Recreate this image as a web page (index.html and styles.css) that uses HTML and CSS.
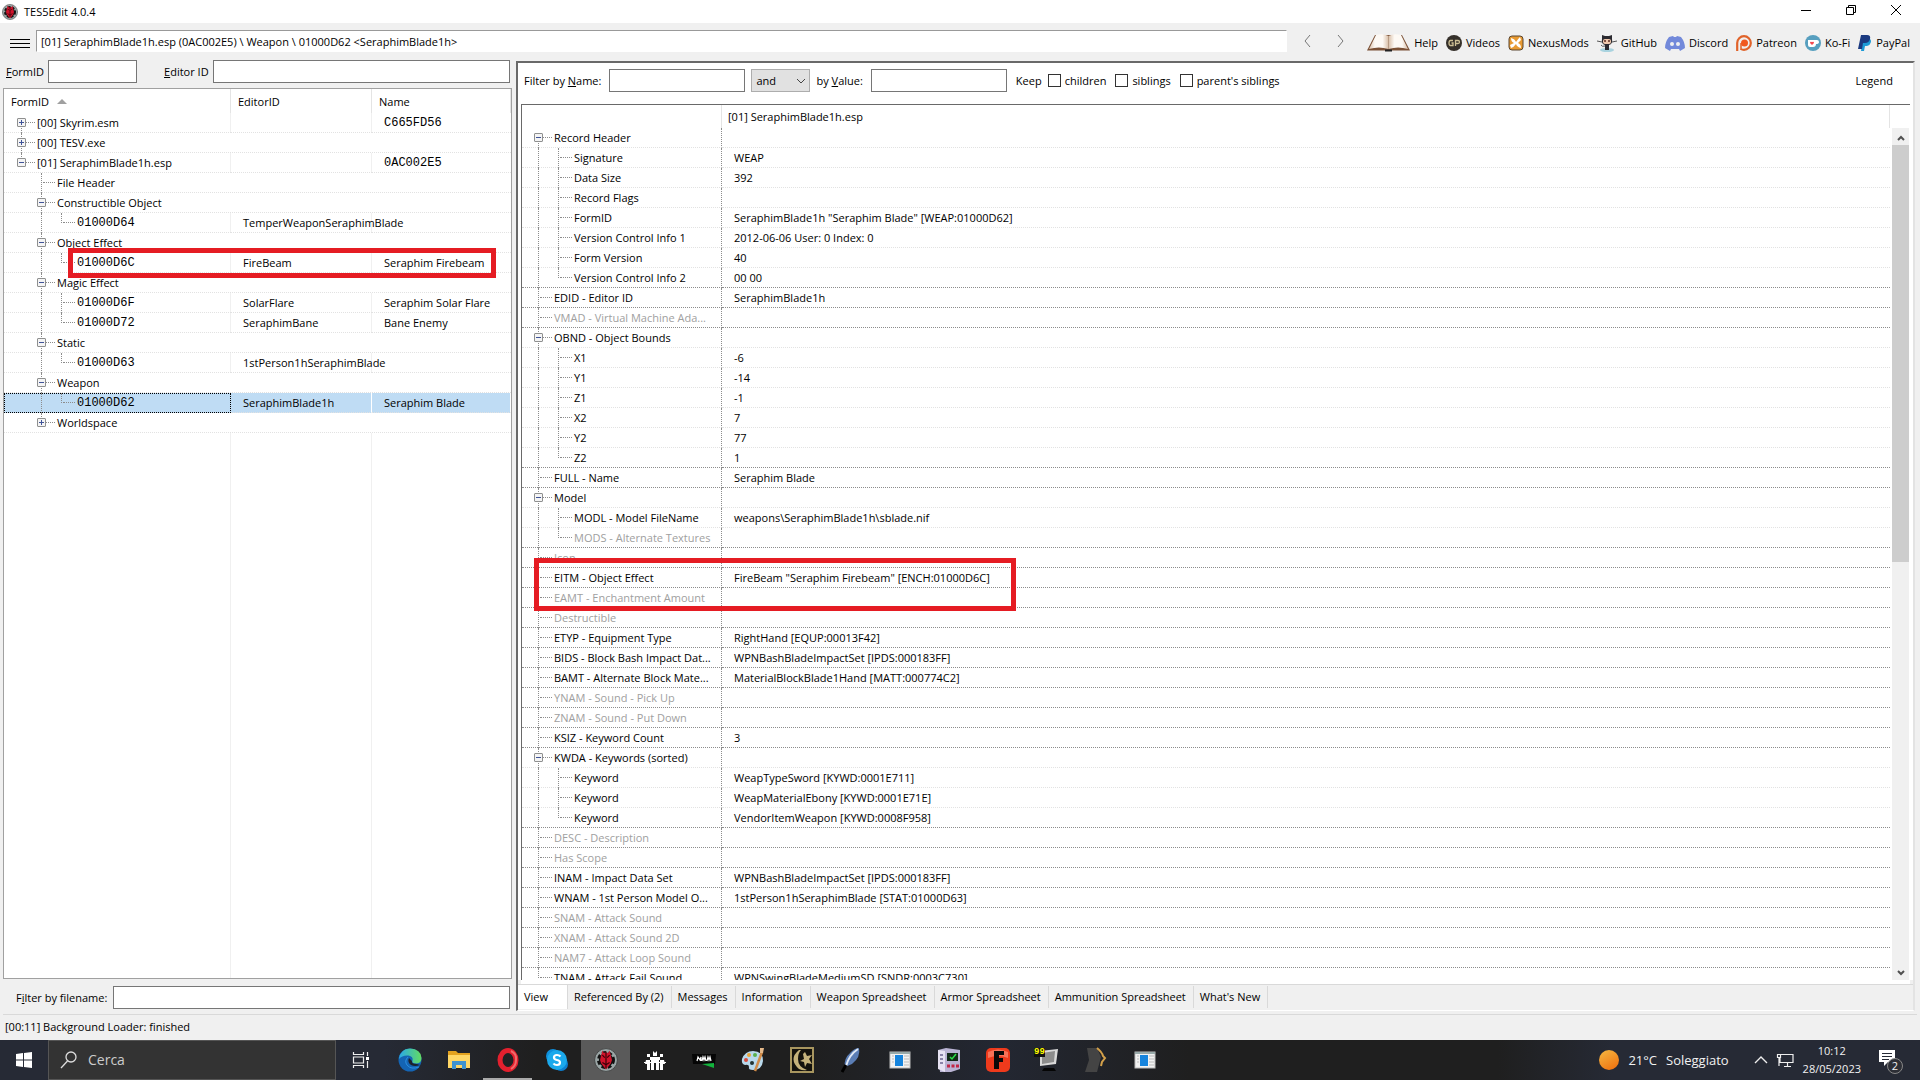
FILE: index.html
```html
<!DOCTYPE html>
<html lang="en">
<head>
  <meta charset="UTF-8">
  <title>TES5Edit 4.0.4</title>
  <meta name="viewport" content="width=device-width, initial-scale=1.0">
  <link rel="stylesheet" href="styles.css">
</head>
<body>
  <svg width="0" height="0" class="defs">
    <symbol id="logo" viewBox="0 0 20 20">
      <circle cx="10" cy="10" r="9.5" fill="#9aa5a5" stroke="#333" stroke-width=".6"/>
      <circle cx="10" cy="10" r="6" fill="#111" stroke="#111" stroke-width="3" stroke-dasharray="3 2"/>
      <path d="M7 2l1 2h4l1-2 1 4 1 4-1 3-4 5-4-5-1-3 1-4z" fill="#d0142c"/>
      <path d="M7 6l2 2M13 6l-2 2M7 12l3 2 3-2M10 3v14" stroke="#3d0008" fill="none"/>
    </symbol>
    <symbol id="window" viewBox="0 0 22 18">
      <rect x="1" y="1" width="20" height="16" fill="#f2f2f2" stroke="#bbb"/>
      <path d="M1 2h20" stroke="#9aa" stroke-width="2"/>
      <rect x="6" y="4" width="8" height="11" fill="#1684dd"/>
      <path d="M3 5h2M3 8h2M3 11h2M15 5h5M15 8h5M15 11h5M15 14h5" stroke="#bbb"/>
    </symbol>
  </svg>

  <header class="titlebar">
    <svg class="app-icon"><use href="#logo"/></svg>
    <span class="app-title">TES5Edit 4.0.4</span>
    <div class="win-buttons">
      <button aria-label="Minimize"><svg viewBox="0 0 12 12"><path d="M1 6.500h10"/></svg></button>
      <button aria-label="Restore"><svg viewBox="0 0 12 12"><path d="M1.500 3.500h7v7h-7zM3.500 3.500v-2h7v7h-2"/></svg></button>
      <button aria-label="Close"><svg viewBox="0 0 12 12"><path d="M1 1l10 10M11 1L1 11"/></svg></button>
    </div>
  </header>

  <div class="toolbar">
    <button class="menu" aria-label="Menu"><i></i><i></i><i></i></button>
    <input class="path" type="text" aria-label="Path" value="[01] SeraphimBlade1h.esp (0AC002E5) \ Weapon \ 01000D62 &lt;SeraphimBlade1h&gt;">
    <button class="arrow" aria-label="Back"><svg viewBox="0 0 8 14"><path d="M7 1L2 7l5 6"/></svg></button>
    <button class="arrow" aria-label="Forward"><svg viewBox="0 0 8 14"><path d="M1 1l5 6-5 6"/></svg></button>
    <nav class="links">
      <a href="#"><svg width="43" height="18" viewBox="0 0 43 18">
        <defs><linearGradient id="page"><stop offset="0" stop-color="#d9bfa8"/><stop offset=".3" stop-color="#fdf9f4"/><stop offset=".7" stop-color="#fdf9f4"/><stop offset="1" stop-color="#d9bfa8"/></linearGradient></defs>
        <path d="M8 1L0 16.500h43L35 1z" fill="#7b5136"/>
        <path d="M9 1q7-2 12.500 1v13Q12 12 2 15z" fill="url(#page)"/>
        <path d="M34 1q-7-2-12.500 1v13q9.500-3 19.500 0z" fill="url(#page)"/>
        <path d="M21.500 2v13" stroke="#b79a82"/><path d="M18 16.500h7" stroke="#222" stroke-width="2"/></svg>Help</a>
      <a href="#"><svg width="16" height="16" viewBox="0 0 16 16"><circle cx="8" cy="8" r="8" fill="#35302a"/>
        <path d="M7 5.500H4.500Q3 5.500 3 8t1.500 2.500H7V8H5.500M9.500 11V5.500H12q1.500 0 1.500 1.500T12 8.500H9.500" fill="none" stroke="#cdbf94" stroke-width="1.300"/></svg>Videos</a>
      <a href="#"><svg width="16" height="16" viewBox="0 0 16 16"><rect x="1" y="1" width="14" height="14" rx="3" fill="#e89a32" stroke="#5b4630"/>
        <path d="M3 3q4 1 5 4 2-3 4-5l1 3-3 3q3 1 3 5-4-1-5-4-2 3-5 4l-1-3 4-2Q3 7 3 3z" fill="#fff"/></svg>NexusMods</a>
      <a href="#"><svg width="20" height="18" viewBox="0 0 20 18"><ellipse cx="10" cy="16" rx="7" ry="2" fill="#a9d3df"/>
        <path d="M5 1l3 1h4l3-1v4q1 5-3 6v5H8v-5Q4 10 5 5z" fill="#2b2a30"/><path d="M8 12q-3 1-4-1M0 7l5 1M20 7l-5 1" stroke="#555" fill="none"/>
        <rect x="6" y="5" width="8" height="5" rx="2" fill="#f0c8ad"/><path d="M8 6v2M12 6v2" stroke="#5b2d22" stroke-width="1.500"/></svg>GitHub</a>
      <a href="#"><svg width="20" height="16" viewBox="0 0 20 16"><path d="M4 2l4-1 1 1h2l1-1 4 1q4 5 4 11l-5 3-1-2H6l-1 2-5-3Q0 7 4 2z" fill="#7289da"/>
        <circle cx="7" cy="9" r="2" fill="#f0f0f0"/><circle cx="13" cy="9" r="2" fill="#f0f0f0"/></svg>Discord</a>
      <a href="#"><svg width="16" height="16" viewBox="0 0 16 16"><path d="M1.200 16V8a6.800 6.800 0 1 1 6.800 6.800q-2 0-3-.8" fill="none" stroke="#e0632a" stroke-width="2.200"/>
        <path d="M5 15V8" stroke="#e0632a" stroke-width="1.500"/><circle cx="8.500" cy="8" r="3.500" fill="#f1591f"/></svg>Patreon</a>
      <a href="#"><svg width="16" height="16" viewBox="0 0 16 16"><circle cx="8" cy="8" r="8" fill="#579fbf"/>
        <path d="M3 5h9q2 0 2 2t-3 2q0 3-3 3H5q-2 0-2-2z" fill="#fff"/><path d="M7 10L5 8q0-2 2-1 2-1 2 1z" fill="#f4494f"/></svg>Ko-Fi</a>
      <a href="#"><svg width="14" height="16" viewBox="0 0 14 16"><path d="M5 4h7q2 2 0 5-1 2-5 2l-1 5H3z" fill="#1c9ad6"/>
        <path d="M3 0h6q4 0 3 4-1 4-5 4H5l-1 6H0z" fill="#1b3a80"/></svg>PayPal</a>
    </nav>
  </div>

  <main class="main">
    <section class="left">
      <div class="id-row">
        <label for="formid"><u>F</u>ormID</label>
        <input id="formid" type="text" class="formid">
        <label for="editorid"><u>E</u>ditor ID</label>
        <input id="editorid" type="text" class="grow">
      </div>
      <div class="tree nav-tree">
        <table>
          <colgroup><col class="c-form"><col class="c-edid"><col></colgroup>
          <thead>
            <tr><th>FormID <span class="sort"></span></th><th>EditorID</th><th>Name</th></tr>
          </thead>
          <tbody id="nav-rows"></tbody>
        </table>
        <div class="mark mark-nav"></div>
      </div>
      <div class="file-row">
        <label for="filename">F<u>i</u>lter by filename:</label>
        <input id="filename" type="text" class="grow">
      </div>
    </section>

    <section class="right">
      <div class="filters">
        <label for="byname">Filter by <u>N</u>ame:</label>
        <input id="byname" type="text">
        <div class="select">
          <select aria-label="Operator"><option>and</option><option>or</option></select>
          <svg viewBox="0 0 10 6"><path d="M1 1l4 4 4-4"/></svg>
        </div>
        <label for="byvalue">by <u>V</u>alue:</label>
        <input id="byvalue" type="text">
        <span class="keep">Keep</span>
        <label class="check"><input type="checkbox">children</label>
        <label class="check"><input type="checkbox">siblings</label>
        <label class="check"><input type="checkbox">parent's siblings</label>
        <span class="legend">Legend</span>
      </div>
      <div class="record">
        <div class="tree rec-tree">
          <table>
            <colgroup><col class="c-label"><col></colgroup>
            <thead><tr><th></th><th>[01] SeraphimBlade1h.esp</th></tr></thead>
            <tbody id="rec-rows"></tbody>
          </table>
          <div class="mark mark-rec"></div>
        </div>
        <div class="scrollbar">
          <button aria-label="Scroll up"><svg viewBox="0 0 8 6"><path d="M1 5l3-3 3 3"/></svg></button>
          <div class="thumb"></div>
          <button aria-label="Scroll down"><svg viewBox="0 0 8 6"><path d="M1 1l3 3 3-3"/></svg></button>
        </div>
      </div>
      <div class="tabs">
        <button class="active">View</button>
        <button>Referenced By (2)</button>
        <button>Messages</button>
        <button>Information</button>
        <button>Weapon Spreadsheet</button>
        <button>Armor Spreadsheet</button>
        <button>Ammunition Spreadsheet</button>
        <button>What's New</button>
      </div>
    </section>
  </main>

  <div class="statusbar">[00:11] Background Loader: finished</div>

  <footer class="taskbar">
    <button class="start" aria-label="Start"><svg width="16" height="16" viewBox="0 0 16 16"><path d="M0 2l7-1v6.500H0zM8 1l8-1v7.500H8zM0 8.500h7V15l-7-1zM8 8.500h8V16l-8-1z" fill="#fff"/></svg></button>
    <div class="search">
      <svg width="18" height="18" viewBox="0 0 18 18"><circle cx="11" cy="6" r="5" fill="none" stroke="#ddd" stroke-width="1.300"/><path d="M7.500 10L1 17" stroke="#ddd" stroke-width="1.300"/></svg>
      <input type="text" placeholder="Cerca" aria-label="Cerca">
    </div>
    <div class="apps">
      <button aria-label="Task view"><svg width="18" height="16" viewBox="0 0 18 16"><path d="M1.500 0v2.500h10V0M1.500 16v-2.500h10V16M1.500 5h10v6h-10zM15.500 0v4M15.500 9v7" fill="none" stroke="#eee" stroke-width="1.200"/><rect x="14" y="5" width="3" height="3" fill="#fff"/></svg></button>
      <button aria-label="Edge"><svg width="24" height="24" viewBox="0 0 24 24"><defs><linearGradient id="eg"><stop offset="0" stop-color="#2aa9e8"/><stop offset="1" stop-color="#62dc62"/></linearGradient></defs>
        <circle cx="12" cy="12" r="11.500" fill="#1464b4"/><path d="M1 11Q2 1 12 .5 23 1 23.500 10q0 5-5 5.500-5 0-4-3 1-4-4-5Q4 7 1 11z" fill="url(#eg)"/>
        <path d="M10 9q-4 4-1 8 4 5 12 2" fill="none" stroke="#2b8fe0" stroke-width="1"/><path d="M11 10q-2 4 2 7 4 2 9 0l-3-1q-6 0-5-3z" fill="#1d222c"/></svg></button>
      <button aria-label="Explorer"><svg width="22" height="20" viewBox="0 0 22 20"><path d="M0 1h8l2 2h12v15H0z" fill="#e3a21f"/><path d="M0 5h22v13H0z" fill="#ffd766"/><path d="M4 19v-8h14v8h-4v-4H8v4z" fill="#3f93d0"/></svg></button>
      <button class="running" aria-label="Opera"><svg width="22" height="24" viewBox="0 0 22 24"><ellipse cx="11" cy="12" rx="8" ry="9.500" fill="none" stroke="#e3202e" stroke-width="5"/><path d="M14 3q6 3 5 9 0 6-5 9" fill="none" stroke="#f06a6a" stroke-width="2"/></svg></button>
      <button aria-label="Skype"><svg width="24" height="24" viewBox="0 0 24 24"><circle cx="8" cy="8" r="7" fill="#0f8fdc"/><circle cx="16" cy="16" r="7" fill="#0b7fd0"/><circle cx="12" cy="12" r="10" fill="#1ba9ec"/><path d="M15.500 8.500Q14 7 12 7q-3 0-3 2.500 0 2 3 2.500t3 2.500Q15 17 12 17q-2.500 0-3.500-1.500" fill="none" stroke="#fff" stroke-width="2.200"/></svg></button>
      <button class="current" aria-label="TES5Edit"><svg width="24" height="24"><use href="#logo"/></svg></button>
      <button aria-label="Mod tool"><svg width="22" height="22" viewBox="0 0 22 22"><path d="M6 8h10v3h-1v10h-3V13h-2v8H7V11H6zM2 11h4v10H3v-6H1zM16 11h4l1 4h-2v6h-3zM9 2l2 2 2-2v5H9zM3 5h3v3H3zM16 5h3v3h-3zM0 13h22v1H0z" fill="#fff"/></svg></button>
      <button aria-label="NMM"><svg width="24" height="20" viewBox="0 0 24 20"><path d="M0 4h24l-1 10H1z" fill="#050505"/><path d="M5 11l1-4 2 3 1-3v4M10 11l1-4 1 3 1-3 1 4M15 11l1-4 1 3 1-3 1 4" fill="none" stroke="#fff" stroke-width="1.200"/><path d="M10 14l12-1v5z" fill="#12b33c"/></svg></button>
      <button aria-label="Paint"><svg width="24" height="26" viewBox="0 0 24 26"><path d="M12 4Q22 4 22 14q-1 9-10 9-5 0-4-3 0-3-4-2-4-1-3-6 3-8 11-8z" fill="#b9d9ec"/><circle cx="5" cy="13" r="2" fill="#d74b3c"/><circle cx="8" cy="8" r="2" fill="#e9a53a"/><circle cx="14" cy="8" r="2" fill="#58b04d"/><circle cx="11" cy="16" r="2" fill="#233"/><path d="M21 5l-7 19" stroke="#d18b48" stroke-width="2.500"/><path d="M19 1h4l-1 5h-3z" fill="#e5b98a"/></svg></button>
      <button aria-label="Creation Kit"><svg width="24" height="26" viewBox="0 0 24 26"><rect x="1" y="1" width="22" height="24" fill="#14120d" stroke="#a8965f" stroke-width="2"/><path d="M9 3Q-2 12 9 22q4 2 8 1Q8 20 8 12q0-6 3-9z" fill="#c5b27b"/><path d="M15 5l2 4 5-1-3 4 3 5-5-1-2 4-1-5-4-1 4-2-1-5z" fill="#c5b27b"/></svg></button>
      <button aria-label="Quill"><svg width="20" height="26" viewBox="0 0 20 26"><path d="M18 1Q20 10 11 17l-7 3Q2 12 10 5q4-4 8-4z" fill="#5a7db5"/><path d="M17 2Q8 8 5 19" stroke="#dfe8f5" fill="none" stroke-width="2"/><path d="M5 18l-4 7" stroke="#000" stroke-width="3"/></svg></button>
      <button aria-label="Application"><svg width="22" height="18"><use href="#window"/></svg></button>
      <button aria-label="Test monitor"><svg width="24" height="26" viewBox="0 0 24 26"><path d="M1 3l8-2 14 2v19l-9 3H3z" fill="#b9b3d3"/><path d="M1 3l7 1v21l-7-3z" fill="#e6e2f2"/><path d="M3 8h3M3 12h3M3 16h3" stroke="#8a84a8" stroke-width="2"/><path d="M10 6h11v8H10z" fill="#122a18"/><path d="M13 10l2 2 4-5" stroke="#2de04b" fill="none" stroke-width="1.500"/><path d="M10 19h3M14.500 19h3M19 19h3" stroke="#c22746" stroke-width="3"/></svg></button>
      <button aria-label="F app"><svg width="24" height="26" viewBox="0 0 24 26"><rect y="1" width="24" height="24" rx="5" fill="#ee3a1c"/><path d="M2 5q10-5 20 0v6q-10-4-20 0z" fill="#f77258"/><path d="M8 22V4h10v4h-5v3h4v4h-4v7z" fill="#0a0a0a"/></svg></button>
      <button class="fraps" aria-label="Fraps"><svg width="24" height="24" viewBox="0 0 24 24"><path d="M5 3l18-2-2 15-16 2z" fill="#d9d9d9"/><path d="M7 5l13-2-1 11-12 2z" fill="#8c8c8c"/><path d="M9 20h10l2 3H7z" fill="#050505"/></svg><span class="fps">99</span></button>
      <button aria-label="Profile"><svg width="24" height="26" viewBox="0 0 24 26"><path d="M3 1h10l4 9-4 15H1l4-12z" fill="#444"/><path d="M13 1q5 4 6 8l2 2-3 4-1 4" fill="none" stroke="#d3a04a" stroke-width="2"/></svg></button>
      <button aria-label="Application 2"><svg width="22" height="18"><use href="#window"/></svg></button>
    </div>
    <div class="tray">
      <span class="sun"></span>
      <span class="weather">21°C</span>
      <span class="weather">Soleggiato</span>
      <button class="up" aria-label="Hidden icons"><svg width="14" height="8" viewBox="0 0 14 8"><path d="M1 7l6-6 6 6" fill="none" stroke="#eee" stroke-width="1.400"/></svg></button>
      <svg width="18" height="16" viewBox="0 0 18 16"><path d="M5 2.500h12v8H4V6M8 14.500h7M11.500 11v3M1.500 2.500h3v3h-3zM3 6v8" fill="none" stroke="#eee" stroke-width="1.200"/></svg>
      <div class="clock"><time>10:12</time><time>28/05/2023</time></div>
      <button class="notify" aria-label="Notifications"><svg width="16" height="16" viewBox="0 0 16 16"><path d="M0 0h16v12H9l-4 4v-4H0z" fill="#fff"/><path d="M3 3.500h10M3 6.500h10M3 9.500h7" stroke="#262a35"/></svg><span class="count">2</span></button>
    </div>
  </footer>

  <script src="app.js"></script>
</body>
</html>
```
FILE: styles.css
```css
* {
  box-sizing: border-box;
}
body {
  margin: 0;
  height: 100vh;
  display: flex;
  flex-direction: column;
  overflow: hidden;
  background: #f0f0f0;
  color: #000;
  font-family: "Open Sans", "Noto Sans", sans-serif;
  font-size: 11px;
  line-height: 16px;
  white-space: nowrap;
}
button, input, select {
  font: inherit;
  color: inherit;
  margin: 0;
}
button {
  border: 0;
  padding: 0;
  background: none;
}
.defs {
  position: absolute;
}
.grow {
  flex: 1;
  min-width: 0;
}

/* title bar */
.titlebar {
  display: flex;
  align-items: center;
  height: 23px;
  padding: 0 2px;
  background: #fff;
}
.app-icon {
  width: 16px;
  height: 16px;
  margin-right: 6px;
}
.win-buttons {
  margin-left: auto;
  display: flex;
}
.win-buttons button {
  width: 45px;
  height: 20px;
}
.win-buttons svg {
  width: 12px;
  height: 12px;
  fill: none;
  stroke: #000;
}

/* toolbar */
.toolbar {
  display: flex;
  align-items: center;
  height: 37px;
  padding: 3px 10px 0 10px;
}
.menu {
  width: 20px;
  display: grid;
  gap: 3px;
}
.menu i {
  height: 1px;
  background: #000;
}
.path {
  flex: 1;
  min-width: 0;
  height: 22px;
  margin: 0 12px 4px 6px;
  padding: 0 4px;
  border: 1px solid #fff;
  border-top-color: #999;
  border-left-color: #999;
  background: #fff;
}
.arrow {
  width: 16px;
  margin-right: 18px;
}
.arrow svg {
  width: 8px;
  height: 14px;
  fill: none;
  stroke: #777;
}
.links {
  display: flex;
  gap: 8px;
}
.links a {
  display: flex;
  align-items: center;
  gap: 4px;
  color: #000;
  text-decoration: none;
}

/* main */
.main {
  flex: 1;
  min-height: 0;
  display: flex;
  padding: 0 5px 3px 3px;
}
.left {
  flex: 0 0 509px;
  min-width: 0;
  display: flex;
  flex-direction: column;
  padding-bottom: 2px;
}
.left input, .filters input[type=text] {
  height: 23px;
  border: 1px solid #767676;
  background: #fff;
  padding: 0 4px;
}
.id-row, .file-row {
  display: flex;
  align-items: center;
  gap: 4px;
  padding: 0 2px 0 3px;
}
.id-row .formid {
  width: 89px;
  margin-right: 23px;
}
.file-row {
  gap: 6px;
  padding-left: 13px;
}

/* trees */
.tree {
  position: relative;
  overflow: hidden;
  background: #fff;
}
.tree table {
  width: 100%;
  table-layout: fixed;
  border-collapse: separate;
  border-spacing: 0;
}
.tree th {
  height: 24px;
  padding: 0 6px;
  text-align: left;
  font-weight: normal;
  border-right: 1px solid #e4e4e4;
}
.tree td {
  height: 20px;
  padding: 0 0 0 12px;
  border-bottom: 1px dotted #e2e2e2;
}
.node {
  display: flex;
  height: 19px;
  align-items: center;
}
.node .text {
  margin-left: 6px;
}
/* one 20px step of the connecting lines */
.g {
  position: relative;
  flex: 0 0 20px;
  height: 20px;
}
.g::before {
  content: "";
  position: absolute;
  left: 10px;
  top: 0;
  bottom: 0;
  border-left: 1px dotted #8c8c8c;
}
.g.blank::before {
  display: none;
}
.g.last::before {
  bottom: 10px;
}
.g.first::before {
  top: 10px;
}
.g.tick::after {
  content: "";
  position: absolute;
  left: 12px;
  top: 9px;
  width: 12px;
  border-top: 1px dotted #8c8c8c;
}
.box {
  position: absolute;
  z-index: 1;
  left: 6px;
  top: 5px;
  width: 9px;
  height: 9px;
  border: 1px solid #8e8f8f;
  border-radius: 1px;
  background: linear-gradient(#3f5398, #3f5398) center / 5px 1px no-repeat, #f4f4f4;
}
.box.plus {
  background: linear-gradient(#3f5398, #3f5398) center / 5px 1px no-repeat, linear-gradient(#3f5398, #3f5398) center / 1px 5px no-repeat, #f4f4f4;
}

.nav-tree {
  flex: 1;
  margin: 5px 0 7px;
  border: 1px solid #a0a0a0;
  background:
    linear-gradient(#f0f0f0, #f0f0f0) 226px 0 / 1px 100% no-repeat,
    linear-gradient(#f0f0f0, #f0f0f0) 367px 0 / 1px 100% no-repeat,
    #fff;
}
.c-form {
  width: 227px;
}
.c-edid {
  width: 141px;
}
.nav-tree th {
  padding: 2px 7px 0;
}
.nav-tree td:first-child {
  padding-left: 7px;
}
.nav-tree .group td {
  background: #fff;
}
.mono {
  font-family: "Liberation Mono", monospace;
  font-size: 12px;
}
.sort {
  display: inline-block;
  margin-left: 5px;
  border: 5px solid transparent;
  border-top: 0;
  border-bottom-color: #a0a0a0;
  vertical-align: 2px;
}
.selected td {
  background: #bfdcf4;
  border-right: 1px solid #fff;
}
.selected td:first-child {
  border: 1px dotted #000;
  padding-left: 6px;
}
.selected .node {
  height: 18px;
}

/* right pane */
.right {
  flex: 1;
  min-width: 0;
  display: flex;
  flex-direction: column;
  margin: 1px 0 0 4px;
  border: 2px solid #696969;
  border-right-color: #e3e3e3;
  border-bottom: 1px solid #fff;
}
.filters {
  display: flex;
  align-items: center;
  height: 41px;
  padding: 0 20px 6px 6px;
  background: #fff;
}
.filters input[type=text] {
  width: 136px;
  margin: 0 6px 0 8px;
}
.select {
  position: relative;
  margin-right: 6px;
}
.select select {
  width: 59px;
  height: 23px;
  padding: 0 4px;
  border: 1px solid #adadad;
  border-radius: 0;
  background: #e1e1e1;
  appearance: none;
}
.select svg {
  position: absolute;
  right: 4px;
  top: 9px;
  width: 10px;
  height: 6px;
  fill: none;
  stroke: #444;
  pointer-events: none;
}
.keep {
  margin: 0 6px 0 3px;
}
.check {
  display: flex;
  align-items: center;
  gap: 4px;
  margin-right: 9px;
}
.check input {
  appearance: none;
  width: 13px;
  height: 13px;
  border: 1px solid #333;
  background: #fff;
}
.legend {
  margin-left: auto;
}
.record {
  flex: 1;
  min-height: 0;
  display: flex;
  margin: 0 3px;
  border: 0 solid #696969;
  border-width: 1px 0 0 1px;
  background: #fff;
  box-shadow: -3px 0 #fff, 3px 0 #fff, 0 4px #fff;
}
.rec-tree {
  flex: 1;
  min-width: 0;
}
.c-label {
  width: 200px;
}
.rec-tree th {
  height: 23px;
}
.rec-tree td:first-child {
  padding: 0 2px 0 6px;
  border-right: 1px dotted #8c8c8c;
}
.rec-tree .end td {
  border-bottom-color: #8c8c8c;
}
.unset {
  color: #a0a0a0;
}
.scrollbar {
  width: 17px;
  margin: 23px 1px 0 2px;
  display: flex;
  flex-direction: column;
  background: #f0f0f0;
}
.scrollbar button {
  height: 17px;
}
.scrollbar svg {
  width: 8px;
  height: 6px;
  fill: none;
  stroke: #505050;
  stroke-width: 2;
}
.scrollbar .thumb {
  height: 49%;
  margin-bottom: auto;
  background: #cdcdcd;
}

/* red highlights */
.mark {
  position: absolute;
  border: 5px solid #e51c23;
}
.mark-nav {
  left: 64px;
  top: 159px;
  width: 428px;
  height: 30px;
}
.mark-rec {
  left: 12px;
  top: 453px;
  width: 482px;
  height: 53px;
}

/* tabs */
.tabs {
  display: flex;
  align-items: flex-start;
  height: 26px;
  margin-top: 4px;
  border-top: 1px solid #d9d9d9;
}
.tabs button {
  height: 22px;
  margin-top: 1px;
  padding: 0 7px 0 6px;
  border-right: 1px solid #d9d9d9;
}
.tabs .active {
  width: 50px;
  height: 24px;
  margin-top: 0;
  text-align: left;
  background: #fff;
}

.statusbar {
  height: 26px;
  margin: 0 3px;
  padding: 4px 2px;
  border-top: 1px solid #d9d9d9;
}

/* taskbar */
.taskbar {
  display: flex;
  height: 40px;
  background: linear-gradient(90deg, #262a35 0, #262a35 20%, #1f1f1f 28%, #1f1f1f 42%, #232732 52%, #1f1f1f 62%, #1f1f1f 78%, #262a35 84%);
  color: #f2f2f2;
}
.start {
  width: 48px;
}
.start svg, .apps svg {
  display: block;
  margin: 0 auto;
}
.search {
  display: flex;
  align-items: center;
  width: 288px;
  padding-left: 11px;
  gap: 10px;
  border: 1px solid #555;
  background: #333;
}
.search input {
  flex: 1;
  min-width: 0;
  padding: 0;
  border: 0;
  background: none;
  font-size: 14px;
}
.search input::placeholder {
  color: #ccc;
}
.apps {
  display: flex;
}
.apps button {
  position: relative;
  width: 49px;
}
.apps .current {
  background: #5a5a5a;
}
.apps .running {
  box-shadow: inset 0 -2px #aaa;
}
.fps {
  position: absolute;
  left: 12px;
  top: 8px;
  width: 11px;
  background: #111;
  color: #ff0;
  font: bold 9px/9px "Liberation Mono", monospace;
}
.tray {
  display: flex;
  align-items: center;
  margin-left: auto;
  padding-right: 16px;
}
.sun {
  width: 20px;
  height: 20px;
  margin-right: 9px;
  border-radius: 50%;
  background: linear-gradient(150deg, #f5b942, #ee6c0c);
}
.weather {
  margin-right: 9px;
  font-size: 13px;
}
.up {
  margin: 0 8px 0 16px;
}
.clock {
  display: grid;
  margin: 0 18px 0 9px;
  text-align: center;
  line-height: 18px;
}
.notify {
  position: relative;
  width: 25px;
  text-align: left;
}
.count {
  position: absolute;
  left: 8px;
  top: 8px;
  width: 16px;
  height: 16px;
  border: 1px solid #888;
  border-radius: 50%;
  background: #2d2f36;
  line-height: 14px;
  text-align: center;
}
```
FILE: app.js
```js
// [depth, state, label, editor id, name]  state: "+" closed, "-" open, "" leaf
const navRows = [
  [0, "+", "[00] Skyrim.esm", "", "C665FD56"],
  [0, "+", "[00] TESV.exe"],
  [0, "-", "[01] SeraphimBlade1h.esp", "", "0AC002E5"],
  [1, "", "File Header"],
  [1, "-", "Constructible Object"],
  [2, "", "01000D64", "TemperWeaponSeraphimBlade", ""],
  [1, "-", "Object Effect"],
  [2, "", "01000D6C", "FireBeam", "Seraphim Firebeam"],
  [1, "-", "Magic Effect"],
  [2, "", "01000D6F", "SolarFlare", "Seraphim Solar Flare"],
  [2, "", "01000D72", "SeraphimBane", "Bane Enemy"],
  [1, "-", "Static"],
  [2, "", "01000D63", "1stPerson1hSeraphimBlade", ""],
  [1, "-", "Weapon"],
  [2, "", "01000D62", "SeraphimBlade1h", "Seraphim Blade"],
  [1, "+", "Worldspace"]
];

// [depth, state, label, value]  value null: element not set, drawn grey
const recRows = [
  [0, "-", "Record Header", ""],
  [1, "", "Signature", "WEAP"],
  [1, "", "Data Size", "392"],
  [1, "", "Record Flags", ""],
  [1, "", "FormID", 'SeraphimBlade1h "Seraphim Blade" [WEAP:01000D62]'],
  [1, "", "Version Control Info 1", "2012-06-06 User: 0 Index: 0"],
  [1, "", "Form Version", "40"],
  [1, "", "Version Control Info 2", "00 00"],
  [0, "", "EDID - Editor ID", "SeraphimBlade1h"],
  [0, "", "VMAD - Virtual Machine Ada...", null],
  [0, "-", "OBND - Object Bounds", ""],
  [1, "", "X1", "-6"],
  [1, "", "Y1", "-14"],
  [1, "", "Z1", "-1"],
  [1, "", "X2", "7"],
  [1, "", "Y2", "77"],
  [1, "", "Z2", "1"],
  [0, "", "FULL - Name", "Seraphim Blade"],
  [0, "-", "Model", ""],
  [1, "", "MODL - Model FileName", "weapons\\SeraphimBlade1h\\sblade.nif"],
  [1, "", "MODS - Alternate Textures", null],
  [0, "", "Icon", null],
  [0, "", "EITM - Object Effect", 'FireBeam "Seraphim Firebeam" [ENCH:01000D6C]'],
  [0, "", "EAMT - Enchantment Amount", null],
  [0, "", "Destructible", null],
  [0, "", "ETYP - Equipment Type", "RightHand [EQUP:00013F42]"],
  [0, "", "BIDS - Block Bash Impact Dat...", "WPNBashBladeImpactSet [IPDS:000183FF]"],
  [0, "", "BAMT - Alternate Block Mate...", "MaterialBlockBlade1Hand [MATT:000774C2]"],
  [0, "", "YNAM - Sound - Pick Up", null],
  [0, "", "ZNAM - Sound - Put Down", null],
  [0, "", "KSIZ - Keyword Count", "3"],
  [0, "-", "KWDA - Keywords (sorted)", ""],
  [1, "", "Keyword", "WeapTypeSword [KYWD:0001E711]"],
  [1, "", "Keyword", "WeapMaterialEbony [KYWD:0001E71E]"],
  [1, "", "Keyword", "VendorItemWeapon [KYWD:0008F958]"],
  [0, "", "DESC - Description", null],
  [0, "", "Has Scope", null],
  [0, "", "INAM - Impact Data Set", "WPNBashBladeImpactSet [IPDS:000183FF]"],
  [0, "", "WNAM - 1st Person Model O...", "1stPerson1hSeraphimBlade [STAT:01000D63]"],
  [0, "", "SNAM - Attack Sound", null],
  [0, "", "XNAM - Attack Sound 2D", null],
  [0, "", "NAM7 - Attack Loop Sound", null],
  [0, "", "TNAM - Attack Fail Sound", "WPNSwingBladeMediumSD [SNDR:0003C730]"]
];

// is there a later sibling at this depth under the same parent?
function continues(rows, i, depth) {
  for (let j = i + 1; j < rows.length; j++) {
    if (rows[j][0] < depth) return false;
    if (rows[j][0] === depth) return true;
  }
  return false;
}

function node(rows, i, mono) {
  const [depth, state, label] = rows[i];
  let html = "";
  for (let d = 0; d < depth; d++) {
    html += `<span class="g ${continues(rows, i, d) ? "" : "blank"}"></span>`;
  }
  const first = i === 0 ? "first" : "";
  const last = continues(rows, i, depth) ? "" : "last";
  const box = state ? `<i class="box ${state === "+" ? "plus" : ""}"></i>` : "";
  html += `<span class="g tick ${first} ${last}">${box}</span>`;
  return `<div class="node">${html}<span class="text ${mono ? "mono" : ""}">${label}</span></div>`;
}

document.getElementById("nav-rows").innerHTML = navRows.map((r, i) => {
  const cell = node(navRows, i, r[0] === 2);
  if (r[3] === undefined) return `<tr class="group"><td colspan="3">${cell}</td></tr>`;
  const cls = r[2] === "01000D62" ? "selected" : "";
  const nameCls = r[0] === 0 ? "mono" : "";
  return `<tr class="${cls}"><td>${cell}</td><td>${r[3]}</td><td class="${nameCls}">${r[4]}</td></tr>`;
}).join("");

document.getElementById("rec-rows").innerHTML = recRows.map((r, i) => {
  const next = recRows[i + 1];
  const end = !next || next[0] === 0 ? "end" : "";
  const unset = r[3] === null ? "unset" : "";
  return `<tr class="${end} ${unset}"><td>${node(recRows, i)}</td><td>${r[3] || ""}</td></tr>`;
}).join("");
```
